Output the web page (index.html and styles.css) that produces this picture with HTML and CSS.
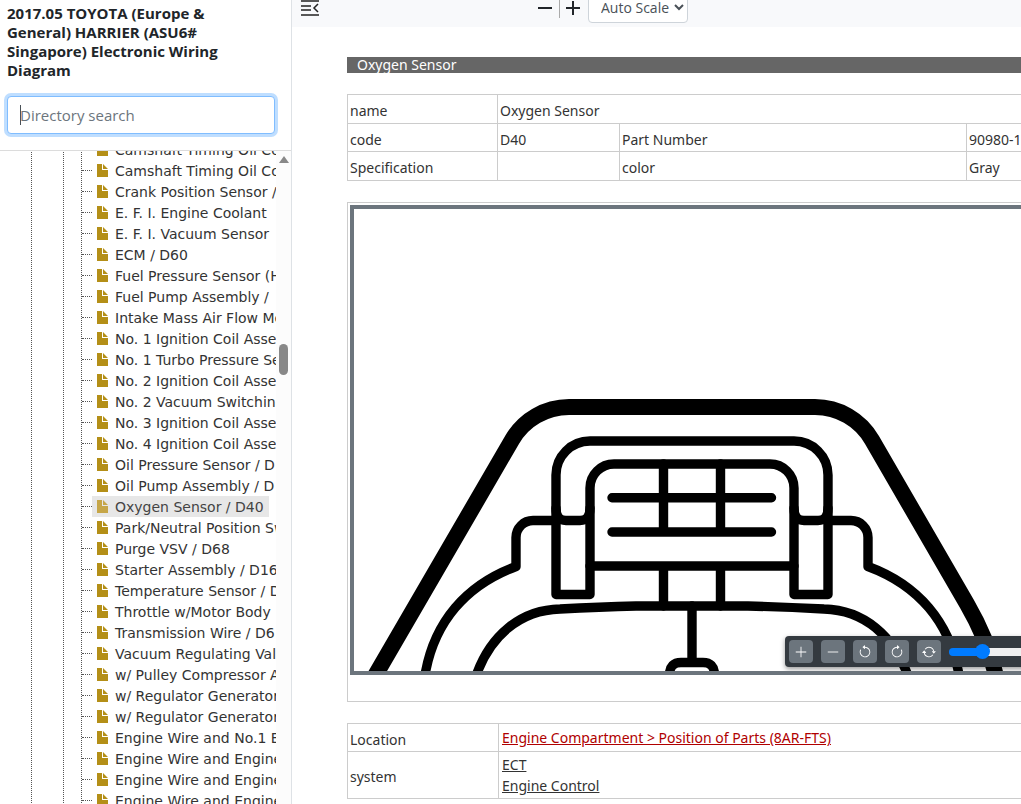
FILE: index.html
```html
<!DOCTYPE html>
<html lang="en">
<head>
<meta charset="utf-8">
<title>Electronic Wiring Diagram</title>
<link rel="stylesheet" href="styles.css">
</head>
<body>
<svg class="defs" aria-hidden="true">
  <symbol id="file" viewBox="0 0 11 13"><path d="M0 0H5V6H11V13H0ZM6 0L11 5H6Z" fill="currentColor"/></symbol>
  <symbol id="rotate" viewBox="0 0 16 16"><path d="M8 3a5 5 0 1 1-4.546 2.914.5.5 0 0 0-.908-.417A6 6 0 1 0 8 2z"/><path d="M8 4.466V.534a.25.25 0 0 0-.41-.192L5.230 2.308a.25.25 0 0 0 0 .384l2.360 1.966A.25.25 0 0 0 8 4.466z"/></symbol>
</svg>
<div class="app">
  <aside class="sidebar">
    <header class="side-head">
      <h1>2017.05 TOYOTA (Europe &amp; General) HARRIER (ASU6# Singapore) Electronic Wiring Diagram</h1>
      <input class="search" type="text" placeholder="Directory search" aria-label="Directory search">
    </header>
    <div class="side-body">
      <nav class="tree" aria-label="Directory">
        <div class="branch outer"><div class="branch middle">
          <ul class="branch leaves">
            <li><a href="#"><svg><use href="#file"/></svg>Camshaft Timing Oil Control Valve</a></li>
            <li><a href="#"><svg><use href="#file"/></svg>Camshaft Timing Oil Control Valve</a></li>
            <li><a href="#"><svg><use href="#file"/></svg>Crank Position Sensor / D</a></li>
            <li><a href="#"><svg><use href="#file"/></svg>E. F. I. Engine Coolant</a></li>
            <li><a href="#"><svg><use href="#file"/></svg>E. F. I. Vacuum Sensor</a></li>
            <li><a href="#"><svg><use href="#file"/></svg>ECM / D60</a></li>
            <li><a href="#"><svg><use href="#file"/></svg>Fuel Pressure Sensor (High)</a></li>
            <li><a href="#"><svg><use href="#file"/></svg>Fuel Pump Assembly /</a></li>
            <li><a href="#"><svg><use href="#file"/></svg>Intake Mass Air Flow Meter</a></li>
            <li><a href="#"><svg><use href="#file"/></svg>No. 1 Ignition Coil Assembly</a></li>
            <li><a href="#"><svg><use href="#file"/></svg>No. 1 Turbo Pressure Sensor</a></li>
            <li><a href="#"><svg><use href="#file"/></svg>No. 2 Ignition Coil Assembly</a></li>
            <li><a href="#"><svg><use href="#file"/></svg>No. 2 Vacuum Switching Valve</a></li>
            <li><a href="#"><svg><use href="#file"/></svg>No. 3 Ignition Coil Assembly</a></li>
            <li><a href="#"><svg><use href="#file"/></svg>No. 4 Ignition Coil Assembly</a></li>
            <li><a href="#"><svg><use href="#file"/></svg>Oil Pressure Sensor / D</a></li>
            <li><a href="#"><svg><use href="#file"/></svg>Oil Pump Assembly / D</a></li>
            <li><a href="#" class="selected" aria-current="page"><svg><use href="#file"/></svg>Oxygen Sensor / D40</a></li>
            <li><a href="#"><svg><use href="#file"/></svg>Park/Neutral Position Switch</a></li>
            <li><a href="#"><svg><use href="#file"/></svg>Purge VSV / D68</a></li>
            <li><a href="#"><svg><use href="#file"/></svg>Starter Assembly / D16</a></li>
            <li><a href="#"><svg><use href="#file"/></svg>Temperature Sensor / D</a></li>
            <li><a href="#"><svg><use href="#file"/></svg>Throttle w/Motor Body</a></li>
            <li><a href="#"><svg><use href="#file"/></svg>Transmission Wire / D6</a></li>
            <li><a href="#"><svg><use href="#file"/></svg>Vacuum Regulating Valve</a></li>
            <li><a href="#"><svg><use href="#file"/></svg>w/ Pulley Compressor Assembly</a></li>
            <li><a href="#"><svg><use href="#file"/></svg>w/ Regulator Generator</a></li>
            <li><a href="#"><svg><use href="#file"/></svg>w/ Regulator Generator</a></li>
            <li><a href="#"><svg><use href="#file"/></svg>Engine Wire and No.1 Engine</a></li>
            <li><a href="#"><svg><use href="#file"/></svg>Engine Wire and Engine</a></li>
            <li><a href="#"><svg><use href="#file"/></svg>Engine Wire and Engine</a></li>
            <li><a href="#"><svg><use href="#file"/></svg>Engine Wire and Engine</a></li>
          </ul>
        </div></div>
      </nav>
      <div class="scrollbar" aria-hidden="true"><span class="arrow"></span><span class="thumb"></span></div>
    </div>
  </aside>

  <main class="main">
    <div class="toolbar">
      <button class="tool" type="button" aria-label="Collapse menu"><svg width="18" height="16" viewBox="0 0 18 16" fill="none" stroke="#222" stroke-width="1.5"><path d="M0 1H18M0 6H10M0 10H10M0 15H18"/><path d="M17 4L13 8L17 12"/></svg></button>
      <div class="zoom">
        <button class="tool" type="button" aria-label="Zoom out"><svg width="14" height="14" viewBox="0 0 14 14" stroke="#212529" stroke-width="2"><path d="M0 7H14"/></svg></button>
        <span class="divider"></span>
        <button class="tool" type="button" aria-label="Zoom in"><svg width="14" height="14" viewBox="0 0 14 14" stroke="#212529" stroke-width="2"><path d="M0 7H14M7 0V14"/></svg></button>
        <select class="scale" aria-label="Scale"><option>Auto Scale</option></select>
      </div>
    </div>

    <article class="doc">
      <h2>Oxygen Sensor</h2>

      <table class="grid info">
        <colgroup><col class="c1"><col class="c2"><col class="c3"><col></colgroup>
        <tr><td>name</td><td colspan="3">Oxygen Sensor</td></tr>
        <tr class="short"><td>code</td><td>D40</td><td>Part Number</td><td>90980-1</td></tr>
        <tr><td>Specification</td><td></td><td>color</td><td>Gray</td></tr>
      </table>

      <div class="frame">
        <div class="viewer">
          <svg class="drawing" width="700" height="462" viewBox="354 209 700 462" fill="none" stroke="#000" stroke-width="9.4" stroke-linecap="round" stroke-linejoin="round" role="img" aria-label="Connector drawing">
            <path stroke-width="16" d="M372 681L512 440A66 66 0 0 1 569 407H815A66 66 0 0 1 872 440L967 604Q989 642 996 677"/>
            <path d="M556 475A34 34 0 0 1 590 441H794A34 34 0 0 1 828 475V594.500H794V488A24 24 0 0 0 770 464H614A24 24 0 0 0 590 488V594.500H556Z"/>
            <path d="M556 508Q556 520.500 566 520.500H580Q590 520.500 590 508M794 508Q794 520.500 804 520.500H818Q828 520.500 828 508"/>
            <path d="M663.500 464V532M720.500 464V532M663.500 566V606M720.500 566V606M612 497.700H771.500M612 532H771.500M590 566H794M692 606V662"/>
            <path d="M556 520.500H533A17 17 0 0 0 516 537.500V566.500C466 585 434 622 425 675M828 520.500H851A17 17 0 0 1 868 537.500V566.500C918 585 950 622 959 675"/>
            <path d="M476 676C490 636 520 610 560 609Q600 607 636 606H748Q784 607 824 609C864 610 894 636 908 676"/>
            <path d="M669.500 674Q670 662.500 681 662.500H703Q714 662.500 714.500 674"/>
          </svg>
          <div class="controls">
            <button type="button" aria-label="Enlarge"><svg viewBox="0 0 16 16"><path d="M2 7.500H7.500V2H8.500V7.500H14V8.500H8.500V14H7.500V8.500H2Z"/></svg></button>
            <button type="button" aria-label="Reduce"><svg viewBox="0 0 16 16"><path d="M2 7.500H14V8.500H2Z"/></svg></button>
            <button type="button" aria-label="Rotate left"><svg viewBox="0 0 16 16"><use href="#rotate"/></svg></button>
            <button type="button" aria-label="Rotate right"><svg class="mirror" viewBox="0 0 16 16"><use href="#rotate"/></svg></button>
            <button type="button" aria-label="Reset"><svg viewBox="0 0 16 16"><path d="M11.534 7h3.932a.25.25 0 0 1 .192.41l-1.966 2.360a.25.25 0 0 1-.384 0l-1.966-2.360a.25.25 0 0 1 .192-.41zm-11 2h3.932a.25.25 0 0 0 .192-.41L2.692 6.230a.25.25 0 0 0-.384 0L.342 8.590A.25.25 0 0 0 .534 9z"/><path d="M8 3c-1.552 0-2.940.707-3.857 1.818a.5.5 0 1 1-.771-.636A6.002 6.002 0 0 1 13.917 7H12.900A5.002 5.002 0 0 0 8 3zM3.100 9a5.002 5.002 0 0 0 8.757 2.182.5.5 0 1 1 .771.636A6.002 6.002 0 0 1 2.083 9H3.100z"/></svg></button>
            <input class="slider" type="range" min="0" max="100" value="18" aria-label="Zoom level">
          </div>
        </div>
      </div>

      <table class="grid refs">
        <colgroup><col class="r1"><col></colgroup>
        <tr><td>Location</td><td><a class="red" href="#">Engine Compartment &gt; Position of Parts (8AR-FTS)</a></td></tr>
        <tr class="tall"><td>system</td><td><a href="#">ECT</a><a href="#">Engine Control</a></td></tr>
      </table>
    </article>
  </main>
</div>
</body>
</html>
```

FILE: styles.css
```css
* { box-sizing: border-box; }
body {
  margin: 0;
  background: #fff;
  color: #333;
  font-family: "Noto Sans", "Open Sans", sans-serif;
  font-size: 14px;
}
.defs { display: none; }
button { border: 0; padding: 0; background: none; display: flex; align-items: center; justify-content: center; }
.app { display: flex; height: 100vh; overflow: hidden; }

/* Sidebar */
.sidebar { flex: none; width: 292px; border-right: 1px solid #dee2e6; display: flex; flex-direction: column; }
.side-head { padding: 4px 16px 16px 7px; border-bottom: 1px solid #dcdcdc; }
h1 { margin: 0 0 16px; padding-right: 24px; color: #212529; font: 700 15px/19px "Open Sans", sans-serif; }
.search {
  display: block; width: 100%; height: 38px; padding: 0 12px;
  border: 1px solid #80bdff; border-radius: 4px; outline: 0;
  box-shadow: 0 0 0 3px #bfdeff;
  background: linear-gradient(#495057, #495057) 12px center / 1px 20px no-repeat #fff;
  font: 15px "Open Sans", sans-serif;
}
.search::placeholder { color: #6c757d; opacity: 1; }
.side-body { flex: 1; min-height: 0; display: flex; }
.tree { flex: 1; min-width: 0; overflow: hidden; padding-left: 31px; }
.branch { border-left: 1px dotted #555; margin: 0; }
.outer { padding-left: 31px; margin-top: -12px; }
.middle { padding-left: 17px; }
.leaves { list-style: none; padding: 0; }
.leaves li { display: flex; align-items: center; height: 21px; }
.leaves li::before { content: ""; flex: none; width: 10px; border-top: 1px dotted #555; }
.leaves a {
  display: flex; align-items: center; height: 21px; padding: 0 5px;
  color: #333; text-decoration: none; white-space: nowrap;
  font: 14px Verdana, "DejaVu Sans", sans-serif;
}
.leaves svg { flex: none; width: 11px; height: 13px; margin-right: 7px; color: #b48f17; }
.leaves .selected { background: #e7e7e7; color: #444; }
.leaves .selected svg { color: #c6a648; }
.scrollbar { flex: none; width: 15px; background: #fcfcfc; display: flex; flex-direction: column; align-items: center; padding-top: 5px; }
.arrow { border: 5px solid transparent; border-top: 0; border-bottom: 7px solid #888; }
.thumb { width: 9px; height: 31px; margin-top: 181px; border-radius: 5px; background: #888; }

/* Top bar */
.main { flex: 1; min-width: 0; overflow: hidden; }
.toolbar { display: flex; align-items: center; height: 35px; margin-top: -8px; padding: 0 0 4px 9px; background: #f8f9fb; }
.zoom { display: flex; align-items: center; margin-left: 219px; }
.divider { flex: none; width: 1px; height: 20px; margin: 0 6px 0 7px; background: #aaa; }
.scale {
  width: 100px; height: 31px; margin-left: 8px; padding: 0 0 0 8px;
  border: 1px solid #ced4da; border-radius: 4px; background: #fff; color: #495057;
  font: 14px "Open Sans", sans-serif;
}

/* Document */
.doc { width: 820px; padding: 30px 0 0 55px; }
h2 { margin: 0 0 21px; padding-left: 10px; background: #666; color: #fff; font-size: 14px; line-height: 16px; font-weight: 400; }
.grid { width: 100%; table-layout: fixed; border-collapse: collapse; }
.grid td { height: 29px; padding: 3px 2px 0; border: 1px solid #ccc; line-height: 21px; }
.grid .short td { height: 28px; }
.c1 { width: 150px; }
.c2 { width: 122px; }
.c3 { width: 347px; }
.r1 { width: 151px; }
.frame { margin: 21px 0; padding: 2px 2px 26px; border: 1px solid #ccc; }
.viewer { position: relative; height: 470px; border: 4px solid #6c757d; overflow: hidden; }
.drawing { display: block; }
.controls {
  position: absolute; left: 431px; bottom: 4px;
  display: flex; align-items: center; gap: 8px; height: 31px; padding: 0 4px;
  border-radius: 4px; background: #343a40; box-shadow: 0 2px 5px rgba(0, 0, 0, .4);
}
.controls button { width: 24px; height: 23px; border-radius: 4px; background: #6c757d; }
.controls button svg { width: 14px; height: 14px; fill: #fff; }
.controls .mirror { transform: scaleX(-1); }
.slider { appearance: none; width: 160px; height: 8px; margin: 0; border-radius: 4px; background: linear-gradient(90deg, #007bff 20%, #efefef 20%); }
.slider::-webkit-slider-thumb { appearance: none; width: 15px; height: 15px; border-radius: 50%; background: #007bff; }
.grid.refs td { height: 28px; padding: 0 3px; }
.grid.refs td:first-child { padding: 3px 2px 0; }
.grid.refs .tall td { height: 47px; }
.refs a { display: block; width: fit-content; line-height: 21px; color: #333; }
.refs .red { color: #b00000; }
```
